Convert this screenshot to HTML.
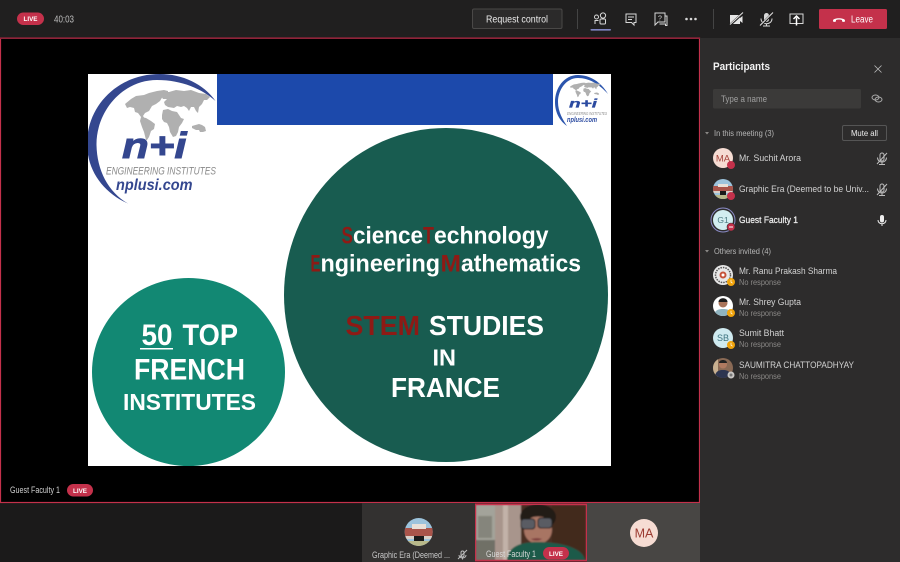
<!DOCTYPE html>
<html><head><meta charset="utf-8"><style>
html,body{margin:0;padding:0;background:#1b1a1a;overflow:hidden}
svg{display:block}
text{font-family:"Liberation Sans",sans-serif}
.b{font-weight:700}
.t{fill:#d2d2d2;font-size:9.5px}
.s{fill:#8a8886;font-size:8.5px}
.ic{fill:none;stroke:#d8d8d8;stroke-width:1}
</style></head><body>
<svg width="900" height="562" viewBox="0 0 900 562" xmlns="http://www.w3.org/2000/svg">
<defs>
<clipPath id="c1"><circle cx="723" cy="189" r="10"/></clipPath>
<clipPath id="c2"><circle cx="418.7" cy="532" r="14"/></clipPath>
<clipPath id="c3"><circle cx="723" cy="306" r="10"/></clipPath>
<clipPath id="c4"><circle cx="723" cy="368" r="10"/></clipPath>
<clipPath id="v"><rect x="476" y="505" width="110" height="55"/></clipPath>
<clipPath id="sl"><rect x="88" y="74" width="523" height="392"/></clipPath>
<filter id="bl" x="0" y="0" width="100%" height="100%"><feGaussianBlur stdDeviation="0.9"/></filter>
<g id="map" fill="#b0b0b0">
<path d="M131 99l5-3 8-1 5-2 8-2 7-1 4 1 0 3-5 2-3 5-4 3-4 2-3 5-4 2-2 3 2 3-4-2-3-4-3-1-1-4-4-1-3 1-2-4z"/>
<path d="M141 117l5 1 5 3 4 3-1 5-3 2-2 6-2 3-1 0-2-8-2-5-2-6z"/>
<path d="M159 95l4-3 6 0 7-2 8 1 7-1 8 3 7 1 4 3-3 3-3 0-2 4-3 3-1 6-2-2-2-4-3 0-2 4-2-3-3-2-3 1-4-1-3 2-6-1-3-2-1-3 3-3-4 0-2-3z"/>
<path d="M163 110l5-1 4 2 5 1 2 3 2 3 3 1-2 4-3 4-1 5-2 4-3 1-3-5-1-5-2-4-3-1-2-3 0-4z"/>
<path d="M192 126l7-2 3 1 3 2 1 4-3 1-3 0-1-2-3 0-4-2z"/>
</g>
</defs>

<rect width="900" height="562" fill="#1b1a1a"/>
<rect width="900" height="38" fill="#201f1f"/>

<!-- top bar -->
<rect x="17" y="12.5" width="27" height="12.500" rx="6.250" fill="#c4314b"/>
<text x="23.500" y="21" class="b" font-size="6.500" fill="#fff" textLength="14" lengthAdjust="spacingAndGlyphs">LIVE</text>
<text x="54" y="22.500" font-size="10" fill="#bdbdbd" textLength="20" lengthAdjust="spacingAndGlyphs">40:03</text>
<rect x="472.500" y="9" width="89.500" height="19.500" rx="1.500" fill="#2b2a2a" stroke="#4a4847"/>
<text x="486" y="22.500" font-size="10" fill="#ececec" textLength="62" lengthAdjust="spacingAndGlyphs">Request control</text>
<rect x="577" y="9" width="1" height="20" fill="#444"/>
<rect x="713" y="9" width="1" height="20" fill="#444"/>
<!-- people -->
<g class="ic"><circle cx="603" cy="15.500" r="2.600"/><rect x="600" y="19" width="5.500" height="5" rx="1"/><circle cx="596.500" cy="17" r="2"/><path d="M595 24v-3.500h3.500"/></g>
<rect x="590.500" y="29" width="20.500" height="1.600" rx=".8" fill="#7f85c2"/>
<!-- chat -->
<g class="ic"><path d="M626 14h10v8.500h-2v2.500l-2.500-2.500h-5.500z"/><path d="M628 17h6M628 19.500h4"/></g>
<!-- qna -->
<g class="ic"><path d="M655 13h10v9h-7l-3 3z"/><path d="M665 16h2v9.500h-1.500v-1.500h-6"/></g>
<text x="658" y="20.500" font-size="7" fill="#d8d8d8">?</text>
<circle cx="686.500" cy="19" r="1.300" fill="#d8d8d8"/><circle cx="691" cy="19" r="1.300" fill="#d8d8d8"/><circle cx="695.500" cy="19" r="1.300" fill="#d8d8d8"/>
<!-- camera off -->
<path d="M730 15h10v9h-10z" fill="#e6e6e6"/><path d="M740 18l2.500-2v7l-2.500-2z" fill="#e6e6e6"/><path d="M730 25l13-12" stroke="#201f1f" stroke-width="2.500"/><path d="M730 24.500l13-12" stroke="#e6e6e6" stroke-width="1"/>
<!-- mic off -->
<g class="ic"><rect x="764" y="13" width="5" height="9" rx="2.500" fill="#d8d8d8" stroke="none"/><path d="M761 18.500c0 7 11 7 11 0M766.500 23.500v2.500M763 26h7"/></g>
<path d="M760 26l13-13" stroke="#201f1f" stroke-width="2.500"/><path d="M760 25.500l13-13" stroke="#e6e6e6" stroke-width="1"/>
<!-- share -->
<g class="ic"><path d="M790 14h13v9.500h-13z"/><path d="M796.500 25.500v-8M793.500 19l3-3 3 3" stroke-width="1.500" stroke="#fff"/></g>
<rect x="819" y="9" width="68" height="20" rx="1.500" fill="#c4314b"/>
<path d="M833 20.500c0-3 12-3 12 0 0 1-.5 1.500-1 1.500l-2-.5v-1.500c-2-.7-4-.7-6 0v1.500l-2 .5c-.5 0-1-.5-1-1.500z" fill="#fff"/>
<text x="851" y="22.500" font-size="10" fill="#fff" textLength="22" lengthAdjust="spacingAndGlyphs">Leave</text>

<!-- stage -->
<rect x=".5" y="38" width="699" height="464.500" fill="#000" stroke="#c4314b" stroke-width="1.200"/>
<rect x="0" y="37.500" width="700" height="1.500" fill="#8f2339"/>

<!-- slide -->
<rect x="88" y="74" width="523" height="392" fill="#fff"/>
<rect x="217" y="74" width="336" height="51" fill="#1c49ab"/>
<ellipse cx="446" cy="295" rx="162" ry="167" fill="#185c50"/>
<ellipse cx="188.500" cy="372" rx="96.500" ry="94" fill="#128873"/>

<g clip-path="url(#sl)">
<path d="M215.500 101C204 84 182 74 160 74 118 74 88 105 87 142c-.5 27 15 50 41 61.500C108 192 97 170 96.500 145 96 112 122 80 157 80c25 0 45 9 58.500 21z" fill="#34478f"/>
</g>
<use href="#map"/>
<text x="122" y="158" class="b" font-style="italic" font-size="36" fill="#34478f" stroke="#34478f" stroke-width=".9" textLength="64.500" lengthAdjust="spacingAndGlyphs">n+i</text>
<text x="106" y="174.500" font-style="italic" font-size="11" fill="#8a8a8a" textLength="110" lengthAdjust="spacingAndGlyphs">ENGINEERING INSTITUTES</text>
<text x="116" y="190" class="b" font-style="italic" font-size="16" fill="#34478f" textLength="76.500" lengthAdjust="spacingAndGlyphs">nplusi.com</text>

<!-- small logo -->
<path d="M608 94C601 82 590 75 578 75 564 75 555 88 555 102c0 11 5 19 12 24-4-6-9-14-9-24 0-12 8-24 20-24 11 0 21 6 30 16z" fill="#2b55ad"/>
<g transform="translate(525,56.500) scale(.36,.29)"><use href="#map"/></g>
<text x="569" y="107.500" class="b" font-style="italic" font-size="11.500" fill="#2b4aa0" stroke="#2b4aa0" stroke-width=".3" textLength="28" lengthAdjust="spacingAndGlyphs">n+i</text>
<text x="567" y="115" font-style="italic" font-size="4.800" fill="#8a8a8a" textLength="40" lengthAdjust="spacingAndGlyphs">ENGINEERING INSTITUTES</text>
<text x="567" y="122" class="b" font-style="italic" font-size="7.500" fill="#2b4aa0" textLength="30" lengthAdjust="spacingAndGlyphs">nplusi.com</text>

<!-- big circle text -->
<g class="b" font-size="24" fill="#fff">
<text x="341.500" y="243.500" fill="#8e1a15" textLength="11.500" lengthAdjust="spacingAndGlyphs">S</text>
<text x="353" y="243.500" textLength="70" lengthAdjust="spacingAndGlyphs">cience</text>
<text x="423" y="243.500" fill="#8e1a15" textLength="11" lengthAdjust="spacingAndGlyphs">T</text>
<text x="434" y="243.500" textLength="114.500" lengthAdjust="spacingAndGlyphs">echnology</text>
<text x="310.500" y="271.500" fill="#8e1a15" textLength="10" lengthAdjust="spacingAndGlyphs">E</text>
<text x="320.500" y="271.500" textLength="119.500" lengthAdjust="spacingAndGlyphs">ngineering</text>
<text x="440.500" y="271.500" fill="#8e1a15" textLength="20.500" lengthAdjust="spacingAndGlyphs">M</text>
<text x="461" y="271.500" textLength="120" lengthAdjust="spacingAndGlyphs">athematics</text>
</g>
<g class="b" font-size="28" fill="#fff">
<text x="345.500" y="335" fill="#8e1a15" textLength="74.500" lengthAdjust="spacingAndGlyphs">STEM</text>
<text x="429" y="335" textLength="115" lengthAdjust="spacingAndGlyphs">STUDIES</text>
<text x="432.500" y="365.500" font-size="23" textLength="23.500" lengthAdjust="spacingAndGlyphs">IN</text>
<text x="391" y="397" textLength="109" lengthAdjust="spacingAndGlyphs">FRANCE</text>
</g>
<!-- small circle text -->
<g class="b" font-size="30" fill="#fff">
<text x="141.500" y="345" textLength="31" lengthAdjust="spacingAndGlyphs">50</text>
<rect x="140" y="348" width="33" height="1.500" fill="#fff"/>
<text x="182.500" y="345" textLength="55.500" lengthAdjust="spacingAndGlyphs">TOP</text>
<text x="134" y="379.500" textLength="111" lengthAdjust="spacingAndGlyphs">FRENCH</text>
<text x="123" y="410" font-size="23" textLength="133" lengthAdjust="spacingAndGlyphs">INSTITUTES</text>
</g>

<!-- stage label -->
<text x="10" y="493" font-size="9" fill="#cfcfcf" textLength="50" lengthAdjust="spacingAndGlyphs">Guest Faculty 1</text>
<rect x="67" y="484" width="26" height="12.500" rx="6.250" fill="#c4314b"/>
<text x="73" y="492.800" class="b" font-size="6.500" fill="#fff" textLength="14" lengthAdjust="spacingAndGlyphs">LIVE</text>

<!-- right panel -->
<rect x="700" y="38" width="200" height="524" fill="#2d2c2c"/>
<text x="713" y="70" class="b" font-size="11" fill="#f2f2f2" textLength="57" lengthAdjust="spacingAndGlyphs">Participants</text>
<path d="M874.500 65.500l7 7M881.500 65.500l-7 7" stroke="#bbb" stroke-width=".8"/>
<rect x="713" y="89" width="148" height="19.500" rx="1.500" fill="#3b3a39"/>
<text x="721" y="102" font-size="9.500" fill="#a0a0a0" textLength="46" lengthAdjust="spacingAndGlyphs">Type a name</text>
<g class="ic" stroke-width=".9" style="stroke:#aaa"><ellipse cx="875.500" cy="97.500" rx="3.500" ry="2.500"/><ellipse cx="878.500" cy="99.500" rx="3.500" ry="2.500"/></g>

<path d="M705 132h4l-2 2.500z" fill="#8a8886"/>
<text x="714" y="136" font-size="8.500" fill="#b5b5b5" textLength="60" lengthAdjust="spacingAndGlyphs">In this meeting (3)</text>
<rect x="842.500" y="125.500" width="44" height="15" rx="1.500" fill="#2d2c2c" stroke="#555"/>
<text x="851" y="136" font-size="8.500" fill="#eee" textLength="27" lengthAdjust="spacingAndGlyphs">Mute all</text>

<!-- MA -->
<circle cx="723" cy="158" r="10" fill="#f6dcd3"/>
<text x="723" y="161.500" font-size="9.500" fill="#a4433a" text-anchor="middle">MA</text>
<circle cx="731" cy="165" r="4" fill="#c4314b"/>
<text x="739" y="161" class="t" textLength="62" lengthAdjust="spacingAndGlyphs">Mr. Suchit Arora</text>
<!-- GE -->
<g clip-path="url(#c1)"><rect x="713" y="179" width="20" height="20" fill="#9cc3dc"/><rect x="713" y="186" width="20" height="7" fill="#a9544a"/><rect x="718" y="184" width="10" height="3" fill="#e8e0d8"/><rect x="713" y="191" width="20" height="2" fill="#d8d0c8"/><rect x="720" y="191" width="6" height="5" fill="#1a1a1a"/><rect x="713" y="195" width="20" height="4" fill="#b8b88a"/></g>
<circle cx="731" cy="196" r="4" fill="#c4314b"/>
<text x="739" y="192" class="t" textLength="130" lengthAdjust="spacingAndGlyphs">Graphic Era (Deemed to be Univ...</text>
<!-- G1 -->
<circle cx="723" cy="220" r="12" fill="none" stroke="#8b8cc7" stroke-width="1"/>
<circle cx="723" cy="220" r="10" fill="#d2eef0"/>
<text x="723" y="223" font-size="8.500" fill="#4c7c82" text-anchor="middle">G1</text>
<circle cx="731" cy="227" r="4" fill="#c4314b" stroke="#2d2c2c" stroke-width=".6"/><rect x="729" y="226.500" width="4" height="1" fill="#fff"/>
<text x="739" y="223" font-size="9.500" fill="#ededed" stroke="#ededed" stroke-width=".25" textLength="59" lengthAdjust="spacingAndGlyphs">Guest Faculty 1</text>
<!-- mic icons -->
<g class="ic" style="stroke:#bdbdbd"><rect x="880" y="153" width="4" height="8" rx="2"/><path d="M877.500 157.500c0 6 9 6 9 0M882 162v2.500M879 164.500h6M877 164l10-11"/></g>
<g class="ic" style="stroke:#bdbdbd"><rect x="880" y="184" width="4" height="8" rx="2"/><path d="M877.500 188.500c0 6 9 6 9 0M882 193v2.500M879 195.500h6M877 195l10-11"/></g>
<rect x="880" y="215" width="4" height="7.500" rx="2" fill="#eee"/><path d="M878 220c0 5 8 5 8 0M882 224v2" fill="none" stroke="#eee"/>

<path d="M705 250h4l-2 2.500z" fill="#8a8886"/>
<text x="714" y="254" font-size="8.500" fill="#b5b5b5" textLength="57" lengthAdjust="spacingAndGlyphs">Others invited (4)</text>

<!-- Ranu -->
<circle cx="723" cy="275" r="10" fill="#e8e8e8"/><circle cx="723" cy="275" r="7.500" fill="none" stroke="#555" stroke-width="1.500" stroke-dasharray="1.500 1"/><circle cx="723" cy="275" r="3.500" fill="#c6533a"/><circle cx="723" cy="275" r="1.500" fill="#fff"/>
<circle cx="731" cy="282" r="4" fill="#f0a30a"/><path d="M731 279.800v2.400l1.500 1" stroke="#fff" stroke-width=".7" fill="none"/>
<text x="739" y="274" class="t" textLength="98" lengthAdjust="spacingAndGlyphs">Mr. Ranu Prakash Sharma</text>
<text x="739" y="285" class="s" textLength="42" lengthAdjust="spacingAndGlyphs">No response</text>
<!-- Shrey -->
<g clip-path="url(#c3)"><rect x="713" y="296" width="20" height="20" fill="#fff"/><circle cx="723" cy="303" r="4.500" fill="#a9745a"/><path d="M718.500 302c0-5 9-5 9 0z" fill="#1c1c1c"/><path d="M714 316c0-6 5-7 9-7s9 1 9 7z" fill="#8fb4c0"/></g>
<circle cx="731" cy="313" r="4" fill="#f0a30a"/><path d="M731 310.800v2.400l1.500 1" stroke="#fff" stroke-width=".7" fill="none"/>
<text x="739" y="305" class="t" textLength="62" lengthAdjust="spacingAndGlyphs">Mr. Shrey Gupta</text>
<text x="739" y="316" class="s" textLength="42" lengthAdjust="spacingAndGlyphs">No response</text>
<!-- Sumit -->
<circle cx="723" cy="338" r="10" fill="#cfeaf0"/>
<text x="723" y="341" font-size="9" fill="#3d7480" text-anchor="middle">SB</text>
<circle cx="731" cy="345" r="4" fill="#f0a30a"/><path d="M731 342.800v2.400l1.500 1" stroke="#fff" stroke-width=".7" fill="none"/>
<text x="739" y="336" class="t" textLength="45" lengthAdjust="spacingAndGlyphs">Sumit Bhatt</text>
<text x="739" y="347" class="s" textLength="42" lengthAdjust="spacingAndGlyphs">No response</text>
<!-- Saumitra -->
<g clip-path="url(#c4)"><rect x="713" y="358" width="20" height="20" fill="#8a6a55"/><rect x="713" y="358" width="5" height="20" fill="#c8b090"/><circle cx="723" cy="364.500" r="4" fill="#b07a60"/><path d="M719 363c0-4 8-4 8 0z" fill="#222"/><path d="M715 378c0-7 4-8 8-8s8 1 8 8z" fill="#2d3550"/></g>
<circle cx="731" cy="375" r="3.500" fill="#c8c6c4"/><circle cx="731" cy="375" r="1.500" fill="#777"/>
<text x="739" y="368" class="t" textLength="115" lengthAdjust="spacingAndGlyphs">SAUMITRA CHATTOPADHYAY</text>
<text x="739" y="379" class="s" textLength="42" lengthAdjust="spacingAndGlyphs">No response</text>

<!-- bottom tiles -->
<rect x="362" y="503" width="113" height="59" fill="#333130"/>
<g clip-path="url(#c2)"><rect x="404" y="518" width="30" height="28" fill="#9cc3dc"/><rect x="404" y="528" width="30" height="10" fill="#a9544a"/><rect x="412" y="524" width="14" height="5" fill="#e8e0d8"/><rect x="404" y="536" width="30" height="3" fill="#d8d0c8"/><rect x="414" y="536" width="10" height="6" fill="#1a1a1a"/><rect x="404" y="541" width="30" height="5" fill="#b8b88a"/></g>
<text x="372" y="558" font-size="9" fill="#c8c8c8" textLength="78" lengthAdjust="spacingAndGlyphs">Graphic Era (Deemed ...</text>
<g class="ic" style="stroke:#bdbdbd" stroke-width=".8"><rect x="461" y="551" width="3" height="6" rx="1.500"/><path d="M459 555c0 4 7 4 7 0M462.500 558v1.500M458 559l9-9"/></g>

<rect x="587" y="503" width="113" height="59" fill="#484644"/>
<circle cx="644" cy="533" r="14" fill="#f6dcd3"/>
<text x="644" y="537.500" font-size="12.500" fill="#9c3b32" text-anchor="middle">MA</text>

<!-- video tile -->
<rect x="475" y="503.500" width="112" height="58" fill="#c4314b"/>
<g clip-path="url(#v)">
<g filter="url(#bl)">
<rect x="476" y="505" width="110" height="55" fill="#4a2e24"/>
<rect x="476" y="505" width="20" height="55" fill="#a3a39a"/>
<rect x="478" y="516" width="14" height="22" fill="#85857c"/>
<rect x="476" y="540" width="20" height="20" fill="#6f6f66"/>
<rect x="495" y="505" width="26" height="55" fill="#a8958c"/>
<rect x="503" y="505" width="5" height="55" fill="#c2b2a9"/>
<rect x="552" y="505" width="34" height="55" fill="#43291f"/>
<ellipse cx="538" cy="517" rx="18" ry="13" fill="#231b18"/>
<ellipse cx="538" cy="530" rx="14" ry="14" fill="#a87463"/>
<path d="M524 521c8-6 20-6 28 0l-1-6c-8-4-18-4-26 0z" fill="#231b18"/>
<path d="M507 560c1-14 14-18 31-18s44 4 47 18z" fill="#1f5a4a"/>
<rect x="521" y="519" width="14" height="10" rx="3" fill="#5a5c64" stroke="#1e1e1e"/>
<rect x="538" y="518" width="14" height="10" rx="3" fill="#5a5c64" stroke="#1e1e1e"/>
<path d="M531 539c4-1 8-1 11 0-3 2-8 2-11 0z" fill="#7a3a3a"/>
</g>
</g>
<text x="486" y="557" font-size="9" fill="#d8d8d8" textLength="50" lengthAdjust="spacingAndGlyphs">Guest Faculty 1</text>
<rect x="543" y="547" width="26" height="12.500" rx="6.250" fill="#c4314b"/>
<text x="549" y="556" class="b" font-size="6.500" fill="#fff" textLength="14" lengthAdjust="spacingAndGlyphs">LIVE</text>
</svg>
</body></html>
